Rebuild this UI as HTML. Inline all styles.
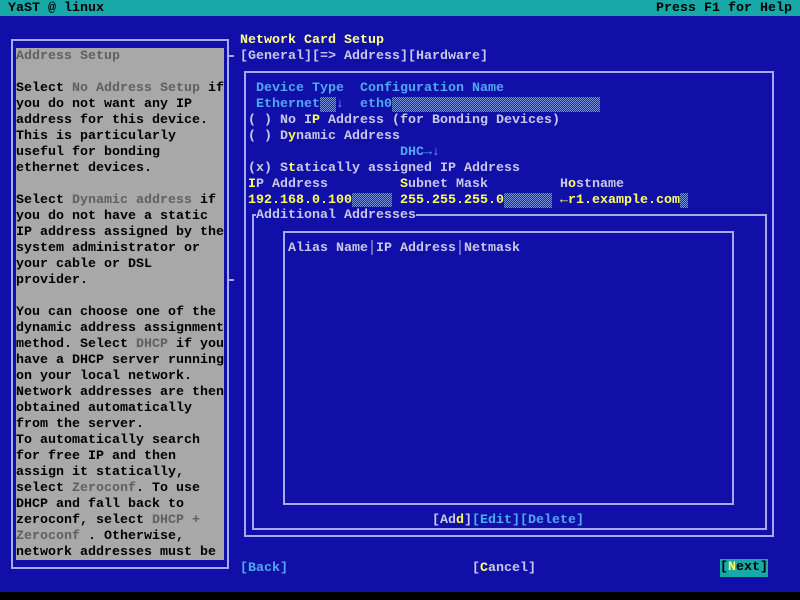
<!DOCTYPE html>
<html><head><meta charset="utf-8"><style>
*{margin:0;padding:0}
body{width:800px;height:600px;background:#000;position:relative;overflow:hidden;font-family:"Liberation Mono",monospace;font-size:13.33px;font-weight:bold}
.l{position:absolute;white-space:pre;line-height:16px;height:16px;padding-top:1px}
.bg{position:absolute;left:0;top:16px;width:800px;height:576px;background:#1010a8}
.top{position:absolute;left:0;top:0;width:800px;height:16px;background:#18a8a8}
.box{position:absolute;border:2px solid #a8a8f0}
.hl{position:absolute;background:#a8a8f0}
.y{color:#ffff60}.c{color:#50a8f0}.g{color:#c8c8e8}.d{color:#606060}.k{color:#000}
.h{background:repeating-conic-gradient(#7a90d8 0 25%,#1a2ab0 0 50%) 0 0/2px 2px}
</style></head><body>
<div class="top"></div>
<div class="l k" style="left:8px;top:0">YaST @ linux</div>
<div class="l k" style="left:656px;top:0">Press F1 for Help</div>
<div class="bg"></div>

<div class="box" style="left:11px;top:39px;width:214px;height:526px"></div>
<div class="hl" style="left:228px;top:55px;width:6px;height:2px"></div>
<div class="hl" style="left:228px;top:279px;width:6px;height:2px"></div>
<div style="position:absolute;left:16px;top:48px;width:208px;height:512px;background:#a8a8a8"></div>
<div class="l d" style="left:16px;top:48px">Address Setup</div>
<div class="l k" style="left:16px;top:80px">Select <span class="d">No Address Setup</span> if
you do not want any IP
address for this device.
This is particularly
useful for bonding
ethernet devices.

Select <span class="d">Dynamic address</span> if
you do not have a static
IP address assigned by the
system administrator or
your cable or DSL
provider.

You can choose one of the
dynamic address assignment
method. Select <span class="d">DHCP</span> if you
have a DHCP server running
on your local network.
Network addresses are then
obtained automatically
from the server.
To automatically search
for free IP and then
assign it statically,
select <span class="d">Zeroconf</span>. To use
DHCP and fall back to
zeroconf, select <span class="d">DHCP +</span>
<span class="d">Zeroconf</span> . Otherwise,
network addresses must be</div>

<div class="l" style="left:240px;top:32px;color:#ffff90">Network Card Setup</div>
<div class="l g" style="left:240px;top:48px">[General][=> Address][Hardware]</div>

<div class="box" style="left:244px;top:71px;width:526px;height:462px"></div>
<div class="l c" style="left:256px;top:80px">Device Type  Configuration Name</div>
<div class="l c" style="left:256px;top:96px">Ethernet<span class="h">  </span>↓  eth0<span class="h">                          </span></div>
<div class="l g" style="left:248px;top:112px">( ) No I<span class="y">P</span> Address (for Bonding Devices)</div>
<div class="l g" style="left:248px;top:128px">( ) D<span class="y">y</span>namic Address</div>
<div class="l c" style="left:400px;top:144px">DHC→↓</div>
<div class="l g" style="left:248px;top:160px">(x) S<span class="y">t</span>atically assigned IP Address</div>
<div class="l g" style="left:248px;top:176px"><span class="y">I</span>P Address</div>
<div class="l g" style="left:400px;top:176px"><span class="y">S</span>ubnet Mask</div>
<div class="l g" style="left:560px;top:176px">H<span class="y">o</span>stname</div>
<div class="l y" style="left:248px;top:192px">192.168.0.100<span class="h">     </span></div>
<div class="l y" style="left:400px;top:192px">255.255.255.0<span class="h">      </span></div>
<div class="l y" style="left:560px;top:192px">←r1.example.com<span class="h"> </span></div>

<div class="box" style="left:252px;top:214px;width:511px;height:312px"></div>
<div class="l g" style="left:256px;top:207px;background:#1010a8">Additional Addresses</div>
<div class="box" style="left:283px;top:231px;width:447px;height:270px"></div>
<div class="l g" style="left:288px;top:240px">Alias Name│IP Address│Netmask</div>
<div class="l" style="left:432px;top:512px"><span class="g">[Ad<span class="y">d</span>]</span><span class="c">[Edit][Delete]</span></div>

<div class="l c" style="left:240px;top:560px">[Back]</div>
<div class="l g" style="left:472px;top:560px">[<span class="y">C</span>ancel]</div>
<div class="l k" style="left:720px;top:559px;height:17px;background:#18a8a8">[<span class="y">N</span>ext]</div>
</body></html>
